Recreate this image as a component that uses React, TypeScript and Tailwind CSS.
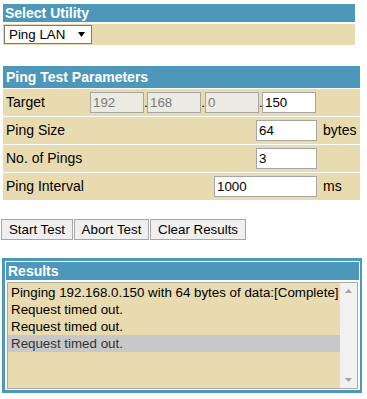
import React from "react";

const BLUE = "bg-[#4c97ba]";

function Input({ value, w, disabled }: { value: string; w: string; disabled?: boolean }) {
  return (
    <div
      className={`${w} h-[21px] border border-[#a6a6a6] flex items-center pl-[2px] text-[13.33px] leading-none ${
        disabled ? "bg-[#ebebe4] text-[#7a7a7a]" : "bg-white text-black"
      }`}
    >
      {value}
    </div>
  );
}

function Row({ label, children, unit }: { label: string; children: React.ReactNode; unit?: string }) {
  return (
    <div className="h-[27px] bg-[#e8dbb0] flex items-center">
      <div className="w-[87px] pl-[3px] text-[14px]">{label}</div>
      {children}
      {unit && <div className="pl-[6px] text-[14px]">{unit}</div>}
    </div>
  );
}

export default function App() {
  return (
    <div className="w-[367px] h-[399px] bg-white overflow-hidden font-['Liberation_Sans',Arial,sans-serif] text-black">
      {/* Select Utility */}
      <div className="pt-[4px] ml-[3px] w-[352px]">
        <div className={`h-[18px] ${BLUE} text-white font-bold text-[14px] leading-[18px] pl-[2px]`}>Select Utility</div>
        <div className="mt-[2px] h-[21px] bg-[#e8dbb0] pt-[1px] pl-[1px]">
          <div className="w-[88px] h-[19px] bg-white border border-[#7a7a7a] flex items-center pl-[4px] pr-[6px] text-[13.33px] leading-none">
            <span className="flex-1">Ping LAN</span>
            <svg width="7" height="5" viewBox="0 0 7 5">
              <polygon points="0,0 7,0 3.5,5" fill="#000" />
            </svg>
          </div>
        </div>
      </div>

      {/* Ping Test Parameters */}
      <div className="mt-[21px] ml-[3px] w-[357px]">
        <div className={`h-[22px] ${BLUE} text-white font-bold text-[14px] leading-[22px] pl-[3px]`}>Ping Test Parameters</div>
        <div className="mt-[1px] flex flex-col gap-[1px]">
          <Row label="Target">
            <div className="flex items-center text-[13.33px]">
              <Input value="192" w="w-[54px]" disabled />
              <span className="w-[3px] text-center">.</span>
              <Input value="168" w="w-[54px]" disabled />
              <span className="w-[4px] text-center">.</span>
              <Input value="0" w="w-[54px]" disabled />
              <span className="w-[3px] text-center">.</span>
              <Input value="150" w="w-[54px]" />
            </div>
          </Row>
          <Row label="Ping Size" unit="bytes">
            <div className="w-[227px] flex justify-end">
              <Input value="64" w="w-[61px]" />
            </div>
          </Row>
          <Row label="No. of Pings">
            <div className="w-[227px] flex justify-end">
              <Input value="3" w="w-[61px]" />
            </div>
          </Row>
          <Row label="Ping Interval" unit="ms">
            <div className="w-[227px] flex justify-end">
              <Input value="1000" w="w-[103px]" />
            </div>
          </Row>
        </div>
      </div>

      {/* Buttons */}
      <div className="mt-[19px] ml-[1px] flex gap-[1px]">
        {[
          ["Start Test", "w-[72px]"],
          ["Abort Test", "w-[75px]"],
          ["Clear Results", "w-[96px]"],
        ].map(([t, w]) => (
          <div
            key={t}
            className={`${w} h-[21px] bg-[#efefef] border border-[#a6a6a6] flex items-center justify-center text-[13.33px] leading-none`}
          >
            {t}
          </div>
        ))}
      </div>

      {/* Results */}
      <div className="mt-[18px] ml-[2px] w-[360px] border-t-[3px] border-b-[3px] border-l-[3px] border-r-[2px] border-[#4c97ba] p-[1px]">
        <div className={`h-[18px] ${BLUE} text-white font-bold text-[14px] leading-[18px] pl-[2px]`}>Results</div>
        <div className="mt-[2px] mx-[1px] h-[107px] border border-[#a9a9a9] bg-[#e8dbb0] flex">
          <div className="flex-1 pt-[1px] text-[13.33px] leading-[17px]">
            <div className="pl-[3px] h-[17px]">Pinging 192.168.0.150 with 64 bytes of data:[Complete]</div>
            <div className="pl-[3px] h-[17px]">Request timed out.</div>
            <div className="pl-[3px] h-[17px]">Request timed out.</div>
            <div className="pl-[3px] h-[17px] bg-[#c8c8c8] text-[#333]">Request timed out.</div>
          </div>
          <div className="w-[17px] bg-[#f1f1f1] flex flex-col justify-between items-center py-[6px]">
            <svg width="7" height="4" viewBox="0 0 7 4">
              <polygon points="0,4 7,4 3.5,0" fill="#a3a3a3" />
            </svg>
            <svg width="7" height="4" viewBox="0 0 7 4">
              <polygon points="0,0 7,0 3.5,4" fill="#a3a3a3" />
            </svg>
          </div>
        </div>
      </div>
    </div>
  );
}
